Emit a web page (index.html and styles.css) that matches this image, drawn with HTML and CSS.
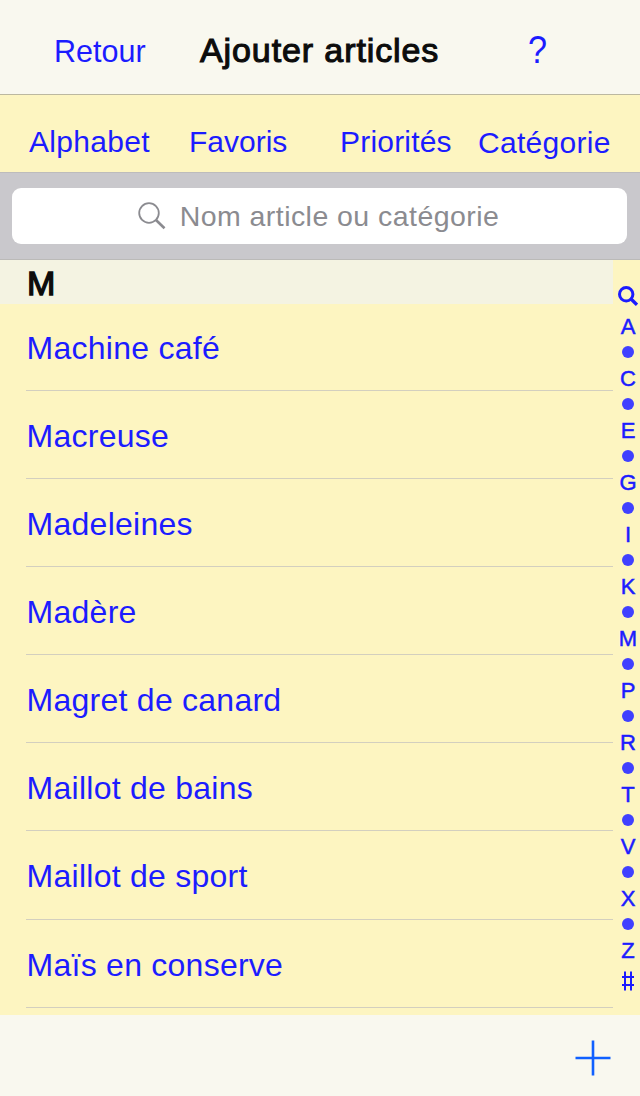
FILE: index.html
```html
<!DOCTYPE html>
<html lang="fr">
	<head>
		<meta charset="utf-8">
		<title>Ajouter articles</title>
		<link rel="stylesheet" href="styles.css">
	</head>
	<body>
		<header class="navbar">
			<a class="back">Retour</a>
			<h1>Ajouter articles</h1>
			<a class="help">?</a>
		</header>
		<nav class="tabs">
			<a class="alphabet">Alphabet</a>
			<a class="favoris">Favoris</a>
			<a class="priorites">Priorités</a>
			<a class="categorie">Catégorie</a>
		</nav>
		<div class="search">
			<div class="field">
				<svg width="28" height="28" viewBox="0 0 28 28">
					<circle cx="11" cy="11" r="9.8"/>
					<path d="M18 18L26.5 26.3" stroke-width="2.6"/>
				</svg>
				<span>Nom article ou catégorie</span>
			</div>
		</div>
		<main class="content">
			<section class="list">
				<h2>M</h2>
				<ul>
					<li>Machine café</li>
					<li>Macreuse</li>
					<li>Madeleines</li>
					<li>Madère</li>
					<li>Magret de canard</li>
					<li>Maillot de bains</li>
					<li>Maillot de sport</li>
					<li>Maïs en conserve</li>
				</ul>
			</section>
			<aside class="index">
				<svg width="20" height="20" viewBox="0 0 20 20">
					<circle cx="8.2" cy="8.2" r="6.7"/>
					<path d="M12.8 12.8L19 18.8" stroke-width="3.4"/>
				</svg>
				<span>A</span><i></i>
				<span>C</span><i></i>
				<span>E</span><i></i>
				<span>G</span><i></i>
				<span>I</span><i></i>
				<span>K</span><i></i>
				<span>M</span><i></i>
				<span>P</span><i></i>
				<span>R</span><i></i>
				<span>T</span><i></i>
				<span>V</span><i></i>
				<span>X</span><i></i>
				<span>Z</span>
				<svg class="hash" width="14" height="20" viewBox="0 0 14 20">
					<path d="M4 0.5V19.5M10 0.5V19.5M1 6H13M1 14H13"/>
				</svg>
			</aside>
		</main>
		<footer class="toolbar">
			<svg width="36" height="36" viewBox="0 0 36 36">
				<path d="M18 0.5V35.5M0.5 18H35.5"/>
			</svg>
		</footer>
	</body>
</html>
```
FILE: styles.css
```css
* {
	box-sizing: border-box;
	margin: 0;
	padding: 0;
}

body {
	width: 640px;
	height: 1096px;
	overflow: hidden;
	display: flex;
	flex-direction: column;
	background-color: #fdf5c1;
	color: #1c1cff;
	font-family: "Liberation Sans", Arial, sans-serif;
}

svg {
	display: block;
	flex: none;
	fill: none;
	stroke: currentColor;
}

/* 标题栏 */
.navbar {
	height: 95px;
	display: flex;
	align-items: center;
	padding: 7px 0 0 54px;
	background-color: #f9f8ef;
	border-bottom: 1px solid #bcb8a0;
	font-size: 30.5px;
}

.back {
	width: 146px;
	padding-top: 2px;
}

.navbar h1 {
	width: 328px;
	font-size: 34px;
	font-weight: normal;
	letter-spacing: 0.9px;
	color: #0c0c0c;
	-webkit-text-stroke: 1.1px #0c0c0c;
}

.help {
	font-size: 38px;
	transform: scaleX(0.9);
	transform-origin: left;
}

.tabs {
	height: 77px;
	display: flex;
	align-items: flex-start;
	padding: 30px 0 0 29px;
	font-size: 30px;
	line-height: 34px;
	letter-spacing: 0.3px;
}

.alphabet {
	width: 160px;
}

.favoris {
	width: 151px;
	letter-spacing: 0;
}

.priorites {
	width: 138px;
	letter-spacing: 0.2px;
}

.categorie {
	padding-top: 1px;
}

/* 搜索框 */
.search {
	height: 88px;
	padding: 15px 13px 0 12px;
	background-color: #c9c8cc;
	border-top: 1px solid #bdbcbc;
	border-bottom: 1px solid #bbbab8;
}

.field {
	height: 56px;
	display: flex;
	align-items: center;
	justify-content: center;
	gap: 14px;
	padding-right: 2px;
	border-radius: 9px;
	background-color: #fff;
	color: #8b8b90;
	font-size: 28.5px;
	letter-spacing: 0.45px;
}

.field svg {
	stroke-width: 1.8;
}

.content {
	height: 755px;
	display: flex;
}

.list {
	width: 613px;
}

.list h2 {
	height: 44px;
	padding-left: 27px;
	line-height: 46px;
	font-size: 34px;
	font-weight: normal;
	color: #0c0c0c;
	-webkit-text-stroke: 1.4px #0c0c0c;
	background-color: #f4f3e2;
}

.list ul {
	margin-left: 26px;
	list-style: none;
}

.list li {
	height: 88.1px;
	padding-left: 0.6px;
	line-height: 90px;
	border-bottom: 1px solid #d3cfbf;
	font-size: 32px;
	letter-spacing: 0.25px;
}

.list li:first-child {
	height: 87px;
	line-height: 88px;
}

/* 右侧字母索引 */
.index {
	width: 27px;
	padding: 26px 0 0 1px;
	display: flex;
	flex-direction: column;
	align-items: center;
}

.index svg {
	stroke-width: 3;
	margin: 0 0 8px 1px;
}

.index span {
	height: 26px;
	line-height: 26px;
	padding-left: 2px;
	font-size: 22px;
	-webkit-text-stroke: 0.5px #1c1cff;
}

.index i {
	width: 12px;
	height: 12px;
	margin: 6px 0 8px 2px;
	border-radius: 50%;
	background-color: #4040ff;
}

.index .hash {
	stroke-width: 2;
	margin: 7px 0 0 2px;
}

.toolbar {
	flex: 1;
	display: flex;
	align-items: center;
	justify-content: flex-end;
	padding: 5px 29px 0 0;
	background-color: #f9f8ef;
	color: #1060ff;
}

.toolbar svg {
	stroke-width: 2.6;
}
```
